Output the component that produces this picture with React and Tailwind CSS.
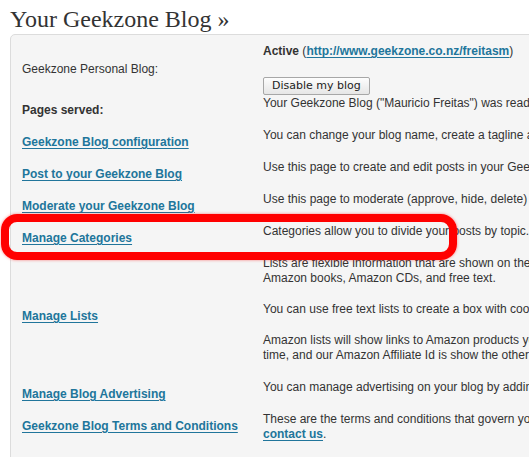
import React from 'react';

// One row of the "Pages served" table: link on the left, notes on the right
const Row = ({ left, children, leftClass = 'items-center pb-[2px]', className = 'pb-px' }) => (
  <div className={`flex ${className}`}>
    <div className={`w-[241px] shrink-0 flex ${leftClass}`}>{left}</div>
    <div className="flex-1 whitespace-nowrap">{children}</div>
  </div>
);

const LinkText = ({ children }) => (
  <a href="#" className="font-bold text-[#21759b] underline underline-offset-[2px] leading-[15px]">
    {children}
  </a>
);

const P = ({ children, className = 'mb-4' }) => (
  <p className={`leading-[15px] ${className}`}>{children}</p>
);

export default function App() {
  return (
    <div className="relative w-[529px] h-[457px] overflow-hidden bg-white text-[12px] text-[#333] font-['Liberation_Sans',Arial,sans-serif]">
      <h2 className="pl-[10px] pt-[4px] leading-[30px] text-[24px] text-[#333] font-['Liberation_Serif',Georgia,serif] whitespace-nowrap">
        Your Geekzone Blog »
      </h2>

      <div className="ml-[10px] w-[900px] min-h-[440px] border border-[#dcdcdc] rounded-tl-[5px] bg-[#f5f5f5] pt-[9px] pl-[11px]">
        <Row leftClass="items-center" left={<span className="leading-[15px]">Geekzone Personal Blog:</span>}>
          <P className="mb-[17px]">
            <span className="font-bold">Active</span> (
            <a href="#" className="font-bold text-[#21759b] underline underline-offset-[2px]">
              http://www.geekzone.co.nz/freitasm
            </a>
            )
          </P>
          <button className="h-[18px] px-[8px] border border-[#a7a7a7] rounded-[2px] bg-gradient-to-b from-[#fdfdfd] to-[#e6e6e6] text-[11px] leading-[16px] text-[#222] font-['DejaVu_Sans',Verdana,sans-serif]">
            Disable my blog
          </button>
        </Row>

        <Row
          leftClass="items-start pt-[7px]"
          left={<span className="font-bold leading-[15px]">Pages served:</span>}
        >
          <P>Your Geekzone Blog ("Mauricio Freitas") was ready on 12/03/2004.</P>
        </Row>

        <Row left={<LinkText>Geekzone Blog configuration</LinkText>}>
          <P>You can change your blog name, create a tagline and change the look of your blog.</P>
        </Row>

        <Row left={<LinkText>Post to your Geekzone Blog</LinkText>}>
          <P>Use this page to create and edit posts in your Geekzone Blog.</P>
        </Row>

        <Row left={<LinkText>Moderate your Geekzone Blog</LinkText>}>
          <P>Use this page to moderate (approve, hide, delete) comments posted to your blog.</P>
        </Row>

        <Row left={<LinkText>Manage Categories</LinkText>}>
          <P>Categories allow you to divide your posts by topic.</P>
        </Row>

        <Row left={<LinkText>Manage Lists</LinkText>}>
          <P>
            Lists are flexible information that are shown on the sidebar of your blog. You can create lists with
            <br />
            Amazon books, Amazon CDs, and free text.
          </P>
          <P>You can use free text lists to create a box with cool links to other sites.</P>
          <P>
            Amazon lists will show links to Amazon products you choose. Your Amazon Affiliate Id is shown half the
            <br />
            time, and our Amazon Affiliate Id is show the other half.
          </P>
        </Row>

        <Row left={<LinkText>Manage Blog Advertising</LinkText>}>
          <P>You can manage advertising on your blog by adding your own ad codes.</P>
        </Row>

        <Row className="" left={<LinkText>Geekzone Blog Terms and Conditions</LinkText>}>
          <P className="mb-0">
            These are the terms and conditions that govern your use of Geekzone Blogs. If you have any questions,
            <br />
            <a href="#" className="font-bold text-[#21759b] underline underline-offset-[2px]">contact us</a>.
          </P>
        </Row>
      </div>

      {/* red annotation box round "Manage Categories" */}
      <div className="absolute left-[1px] top-[214px] w-[456px] h-[46px] border-[8px] border-[#ff0000] rounded-[16px] shadow-[0_0_3px_rgba(255,0,0,0.5)]" />
    </div>
  );
}
